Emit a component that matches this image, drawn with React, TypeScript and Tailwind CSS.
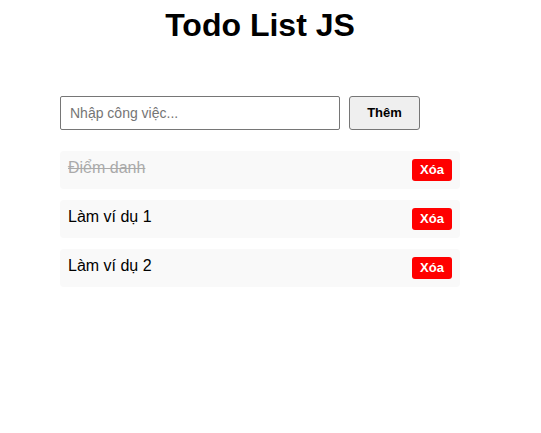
import { useState } from 'react'

type Todo = { id: number; text: string; done: boolean }

export default function App() {
  const [todos, setTodos] = useState<Todo[]>([
    { id: 1, text: 'Điểm danh', done: true },
    { id: 2, text: 'Làm ví dụ 1', done: false },
    { id: 3, text: 'Làm ví dụ 2', done: false },
  ])
  const [value, setValue] = useState('')

  const add = () => {
    if (!value.trim()) return
    setTodos([...todos, { id: Date.now(), text: value.trim(), done: false }])
    setValue('')
  }

  return (
    <div className="min-h-screen bg-white font-['Liberation_Sans',Arial,sans-serif] text-black">
      <div className="ml-[60px] w-[400px] pt-[7px]">
        <h1 className="text-center text-[32px] font-bold leading-[37px]">Todo List JS</h1>

        <div className="mt-[52px] flex gap-[9px]">
          <input
            value={value}
            onChange={(e) => setValue(e.target.value)}
            placeholder="Nhập công việc..."
            className="h-[34px] w-[280px] rounded-[2px] border border-[#767676] px-[9px] text-[14px] outline-none placeholder:text-[#757575]"
          />
          <button
            onClick={add}
            className="h-[34px] w-[71px] rounded-[3px] border border-[#767676] bg-[#efefef] text-[13px] font-bold"
          >
            Thêm
          </button>
        </div>

        <ul className="mt-[21px] flex flex-col gap-[11px]">
          {todos.map((t) => (
            <li key={t.id} className="flex h-[38px] justify-between rounded-[4px] bg-[#f9f9f9] p-[8px]">
              <span
                onClick={() => setTodos(todos.map((x) => (x.id === t.id ? { ...x, done: !x.done } : x)))}
                className={t.done ? 'text-[16px] leading-[18px] text-[#aaa] line-through' : 'text-[16px] leading-[18px]'}
              >
                {t.text}
              </span>
              <button
                onClick={() => setTodos(todos.filter((x) => x.id !== t.id))}
                className="h-[22px] w-[40px] rounded-[3px] bg-[#ff0000] text-[13px] font-bold text-white"
              >
                Xóa
              </button>
            </li>
          ))}
        </ul>
      </div>
    </div>
  )
}
